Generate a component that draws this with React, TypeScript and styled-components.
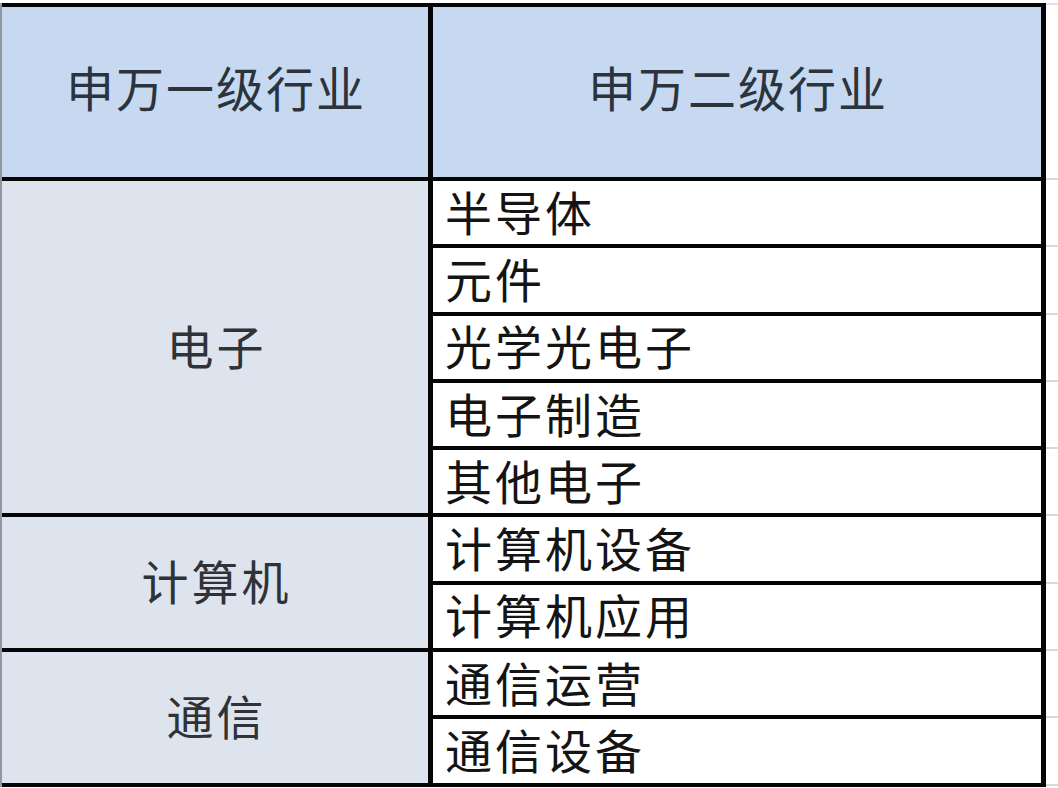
import React from 'react';
import styled, { createGlobalStyle } from 'styled-components';

const GlobalStyle = createGlobalStyle`
    html, body {
        margin: 0;
        padding: 0;
        background: #ffffff;
    }
    body {
        font-family: "Noto Sans CJK SC", "Noto Sans", sans-serif;
    }
`;

const ROW_HEIGHT = 63.3;
const LINE = 4;

const Page = styled.div`
    display: flex;
    align-items: flex-start;
    padding-top: 3px;
    width: 1058px;
`;

const Sheet = styled.div`
    display: grid;
    grid-template-columns: 426px 608px;
    grid-template-rows: 170px repeat(9, ${ROW_HEIGHT}px);
    column-gap: 5px;
    row-gap: ${LINE}px;
    padding: ${LINE}px 5px ${LINE}px 0;
    background: #050505;
    border-left: 2px solid #8f98a3;
    flex-shrink: 0;
`;

const HeaderCell = styled.div`
    display: flex;
    align-items: center;
    justify-content: center;
    background: #c7d9f0;
    color: #2b333d;
    font-size: 48px;
    letter-spacing: 2px;
    padding-left: 2px;
    padding-bottom: 12px;
    line-height: 1;
`;

const GroupCell = styled.div<{ span: number }>`
    grid-column: 1;
    grid-row: span ${({ span }) => span};
    display: flex;
    align-items: center;
    justify-content: center;
    background: #dde4ed;
    color: #2f3338;
    font-size: 47px;
    letter-spacing: 3px;
    padding-left: 3px;
    padding-bottom: 6px;
    line-height: 1;
`;

const ItemCell = styled.div`
    grid-column: 2;
    display: flex;
    align-items: center;
    background: #ffffff;
    color: #141414;
    font-size: 47px;
    letter-spacing: 3px;
    padding-left: 12px;
    padding-bottom: 5px;
    line-height: 1;
    white-space: nowrap;
`;

const Gutter = styled.div`
    display: flex;
    flex-direction: column;
    flex: 1;
    border-top: 2px solid #e2e2e2;
`;

const GutterCell = styled.div<{ h: number }>`
    height: ${({ h }) => h}px;
    border-bottom: 2px solid #d9d9d9;
    box-sizing: border-box;
`;

type Group = { name: string; items: string[] };

const groups: Group[] = [
    { name: '电子', items: ['半导体', '元件', '光学光电子', '电子制造', '其他电子'] },
    { name: '计算机', items: ['计算机设备', '计算机应用'] },
    { name: '通信', items: ['通信运营', '通信设备'] },
];

export default function App() {
    const rowCount = groups.reduce((n, g) => n + g.items.length, 0);

    return (
        <>
            <GlobalStyle />
            <Page>
                <Sheet>
                    <HeaderCell>申万一级行业</HeaderCell>
                    <HeaderCell>申万二级行业</HeaderCell>
                    {groups.map((g) => (
                        <React.Fragment key={g.name}>
                            <GroupCell span={g.items.length}>{g.name}</GroupCell>
                            {g.items.map((item) => (
                                <ItemCell key={item}>{item}</ItemCell>
                            ))}
                        </React.Fragment>
                    ))}
                </Sheet>
                <Gutter>
                    <GutterCell h={175} />
                    {Array.from({ length: rowCount }).map((_, i) => (
                        <GutterCell key={i} h={ROW_HEIGHT + LINE} />
                    ))}
                </Gutter>
            </Page>
        </>
    );
}
